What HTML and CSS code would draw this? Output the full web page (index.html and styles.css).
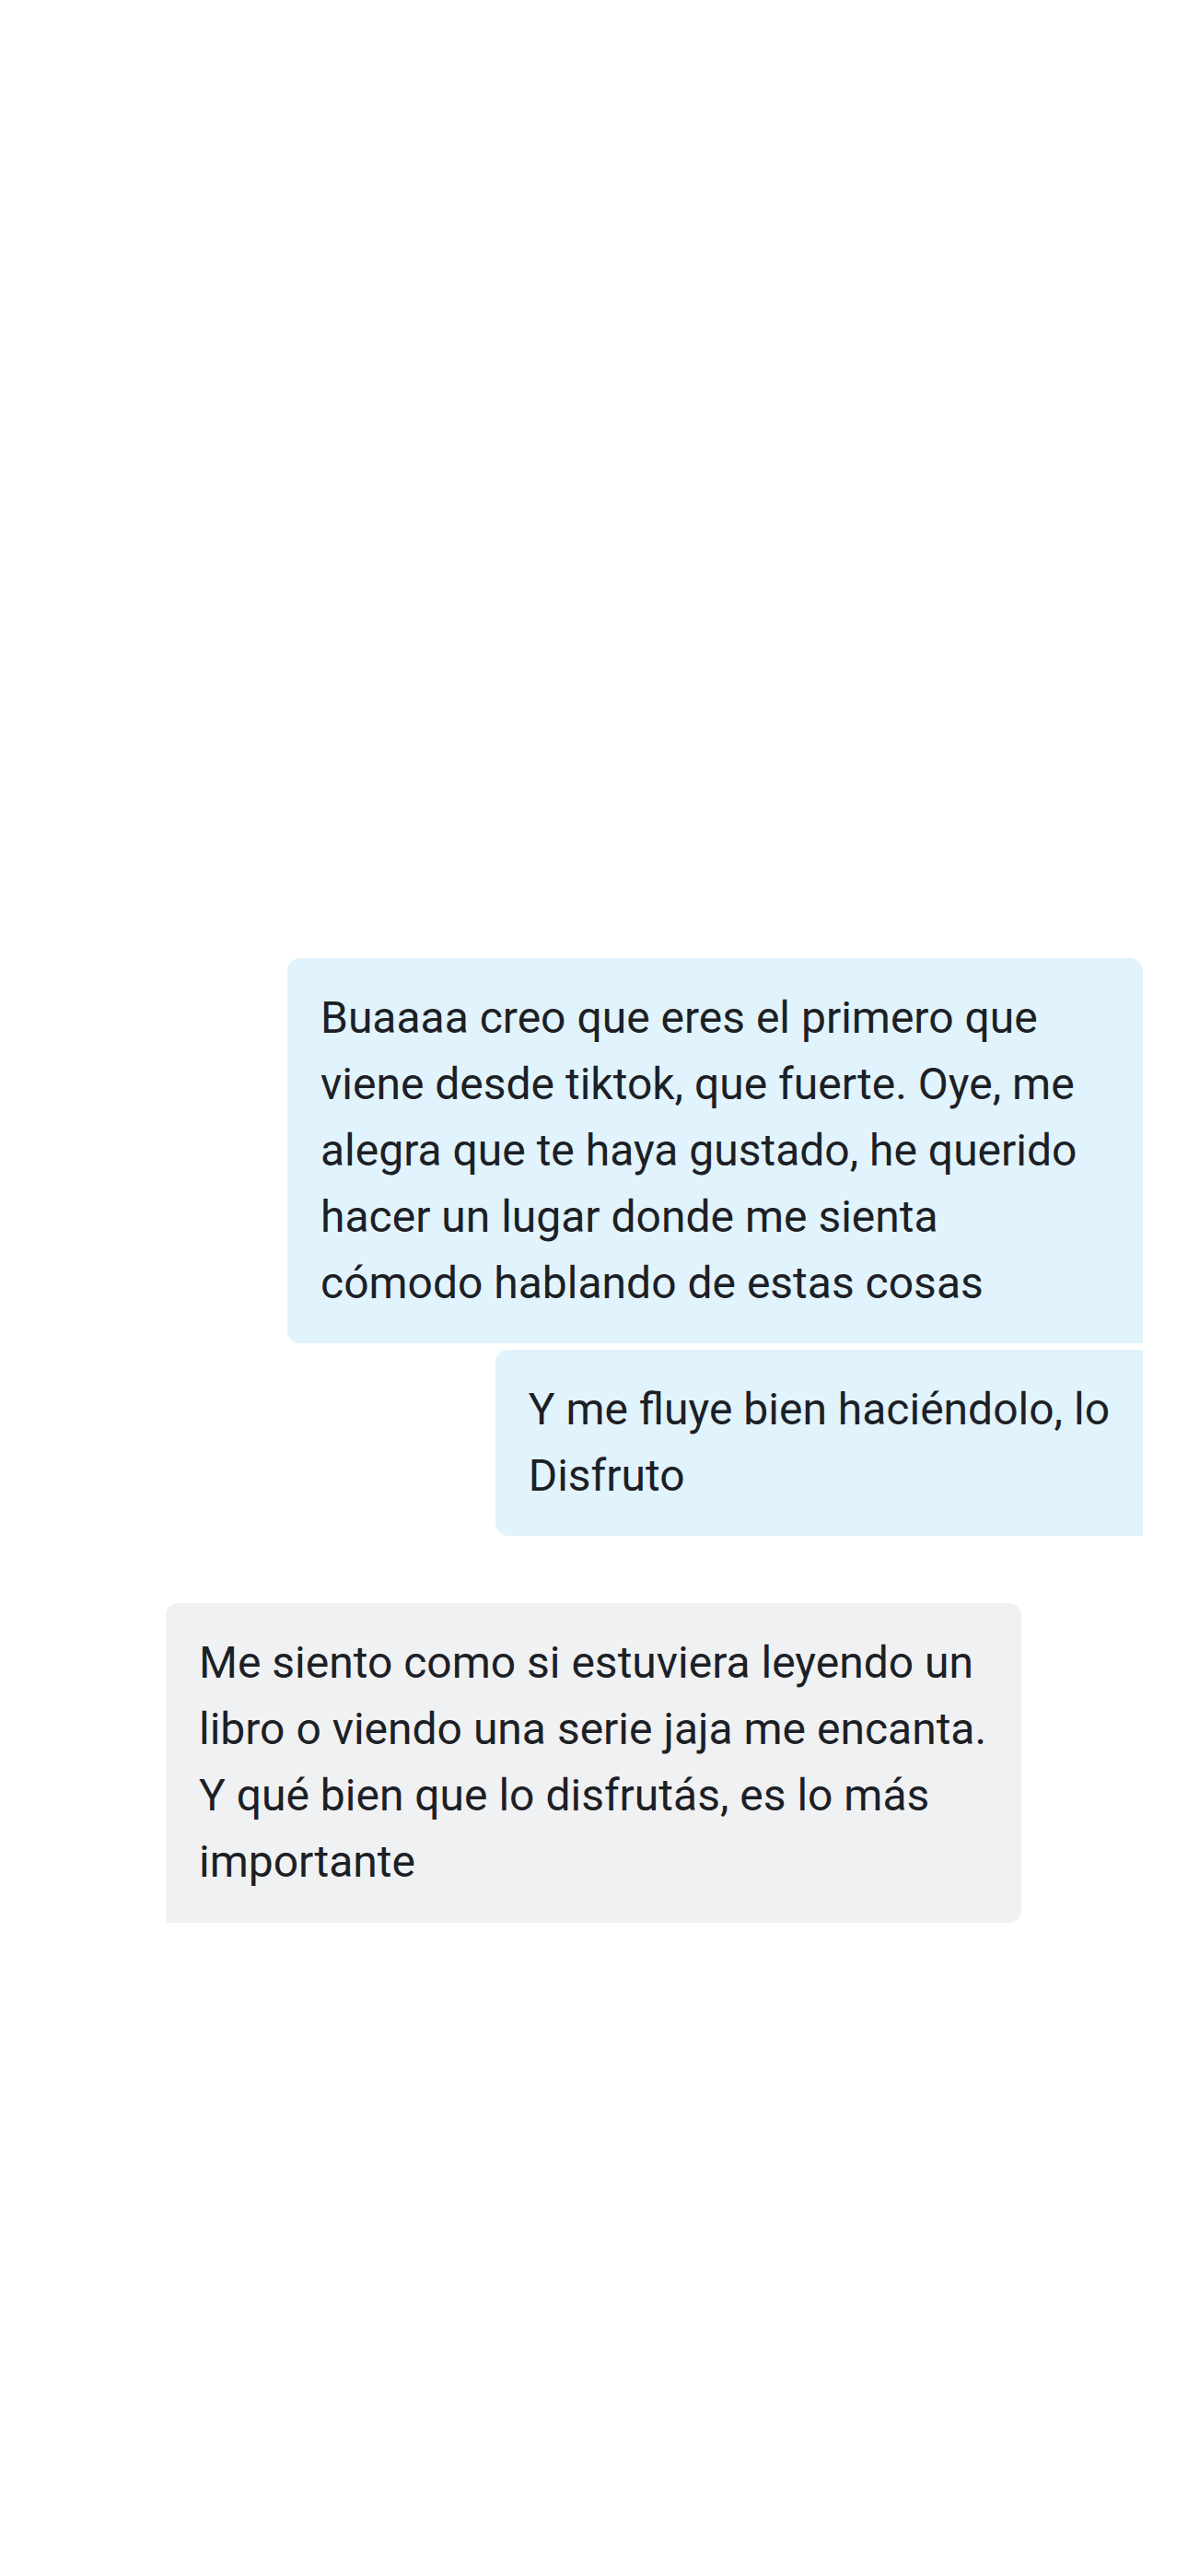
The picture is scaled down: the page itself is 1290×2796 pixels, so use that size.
FILE: index.html
```html
<!DOCTYPE html>
<html lang="es">
<head>
<meta charset="utf-8">
<title>Chat</title>
<link rel="stylesheet" href="styles.css">
</head>
<body>
<main class="chat">
  <div class="bubble bubble-out first">Buaaaa creo que eres el primero que viene desde tiktok, que fuerte. Oye, me alegra que te haya gustado, he querido hacer un lugar donde me sienta cómodo hablando de estas cosas</div>
  <div class="bubble bubble-out next">Y me fluye bien haciéndolo, lo<br>Disfruto</div>
  <div class="bubble bubble-in">Me siento como si estuviera leyendo un libro o viendo una serie jaja me encanta. Y qué bien que lo disfrutás, es lo más importante</div>
</main>
</body>
</html>
```
FILE: styles.css
```css
html, body {
  margin: 0;
  padding: 0;
  background: #ffffff;
}

body {
  width: 1290px;
  height: 2796px;
  overflow: hidden;
  font-family: Roboto, "Liberation Sans", sans-serif;
}

.chat {
  display: flex;
  flex-direction: column;
  padding-top: 1040px;
}

.bubble {
  box-sizing: border-box;
  max-width: 929px;
  width: fit-content;
  padding: 29px 36px 29px 36px;
  font-size: 48px;
  line-height: 72px;
  color: #1c2025;
}

.bubble-out {
  align-self: flex-end;
  margin-right: 49px;
  background: #e1f3fc;
}

.first {
  border-radius: 14px 14px 0 14px;
}

.next {
  margin-top: 7px;
  border-radius: 14px 0 0 14px;
}

.bubble-in {
  align-self: flex-start;
  margin-left: 180px;
  margin-top: 73px;
  padding-bottom: 30px;
  background: #f0f1f3;
  border-radius: 14px 14px 14px 0;
}
```
